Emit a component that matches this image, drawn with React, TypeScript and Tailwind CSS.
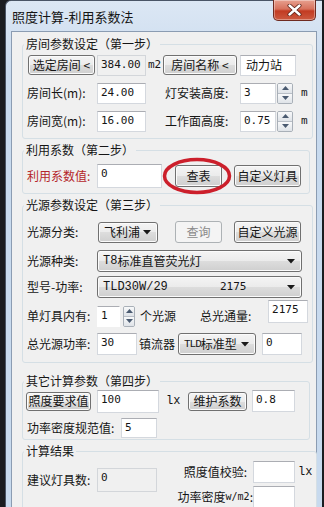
import React from "react";

type P = { className?: string; children?: React.ReactNode };

function Btn({ className = "", children, disabled = false }: P & { disabled?: boolean }) {
  return (
    <div
      className={`flex shrink-0 items-center justify-center whitespace-nowrap rounded-[3px] border ${
        disabled
          ? "border-[#adb2b5] bg-[#f4f4f4] text-[#8a8a8a]"
          : "border-[#707070] bg-[linear-gradient(#f4f4f4_0%,#ebebeb_50%,#dddddd_50%,#cfcfcf_100%)] shadow-[inset_0_0_0_1px_#fbfbfb]"
      } ${className}`}
    >
      {children}
    </div>
  );
}

function Field({ className = "", children, disabled = false }: P & { disabled?: boolean }) {
  return (
    <div
      className={`flex shrink-0 items-start whitespace-nowrap pl-[3px] pt-[1px] border ${
        disabled ? "bg-[#f0f0f0] border-[#d3d6da]" : "bg-white border-[#d4d8de] border-t-[#abadb3]"
      } ${className}`}
    >
      {children}
    </div>
  );
}

function Combo({ className = "", children }: P) {
  return (
    <div
      className={`flex shrink-0 items-center rounded-[3px] border border-[#707070] bg-[linear-gradient(#f4f4f4_0%,#ebebeb_50%,#dddddd_50%,#cfcfcf_100%)] shadow-[inset_0_0_0_1px_#fbfbfb] pl-[5px] pr-[6px] ${className}`}
    >
      <div className="flex min-w-0 flex-1 items-center whitespace-nowrap">{children}</div>
      <svg className="shrink-0" width="8" height="5" viewBox="0 0 8 5">
        <path d="M0 0H8L4 4.5Z" fill="#1a1a1a" />
      </svg>
    </div>
  );
}

function Spin({ className = "" }: P) {
  return (
    <div className={`flex shrink-0 flex-col overflow-hidden rounded-[2px] border border-[#a9b0b8] ${className}`}>
      <div className="flex flex-1 items-center justify-center border-b border-[#b8bec6] bg-linear-to-b from-[#f8f9fa] to-[#dfe3e8]">
        <svg width="7" height="4" viewBox="0 0 7 4">
          <path d="M0 4H7L3.5 0Z" fill="#4a5a70" />
        </svg>
      </div>
      <div className="flex flex-1 items-center justify-center bg-linear-to-b from-[#f8f9fa] to-[#dfe3e8]">
        <svg width="7" height="4" viewBox="0 0 7 4">
          <path d="M0 0H7L3.5 4Z" fill="#4a5a70" />
        </svg>
      </div>
    </div>
  );
}

function Group({ title, className = "", children }: P & { title: string }) {
  return (
    <fieldset className={`w-[288px] rounded-[3px] border border-[#d5dfe5] px-[4px] ${className}`}>
      <legend className="-ml-[3px] px-[2px] leading-[16px]">{title}</legend>
      {children}
    </fieldset>
  );
}

const mono = "font-['DejaVu_Sans_Mono',monospace] text-[11px]";
const serifMono = "font-['Liberation_Mono',monospace] text-[12px]";

export default function App() {
  return (
    <div className="flex h-[507px] w-[324px] overflow-hidden whitespace-nowrap bg-[#1a1c20] font-['Noto_Sans_CJK_SC','Noto_Sans',sans-serif] text-[12px] leading-[16px] text-[#151515]">
      <div className="ml-[5px] flex h-full w-[317px] shrink-0 flex-col rounded-tl-[6px] border-l border-t border-[#4a5566] bg-linear-to-b from-[#dce7f4] from-0% to-[#c8daee] to-15%">
        {/* title bar */}
        <div className="relative flex h-[30px] shrink-0 items-center pl-[6px] text-[13px]">
          <span className="mt-[1px]">照度计算-利用系数法</span>
          <div className="absolute right-[6px] top-[-1px] flex h-[21px] w-[43px] items-center justify-center rounded-b-[5px] border border-t-0 border-[#6e2a20] bg-[linear-gradient(#e7a08f_0%,#d7715c_45%,#c23b22_55%,#cc5a40_100%)] shadow-[inset_0_0_0_1px_rgba(255,255,255,0.35)]">
            <svg width="15" height="12" viewBox="0 0 15 12">
              <path d="M2.5 1.5L12.5 10.5M12.5 1.5L2.5 10.5" stroke="#5a1f15" strokeWidth="4" strokeLinecap="round" />
              <path d="M2.5 1.5L12.5 10.5M12.5 1.5L2.5 10.5" stroke="#ffffff" strokeWidth="2.4" strokeLinecap="round" />
            </svg>
          </div>
        </div>

        {/* client */}
        <div className="mx-[5px] flex flex-1 flex-col border border-[#8b9cb2] bg-[#f0f0f0] pl-[10px] pt-[4px]">
          {/* Group 1 */}
          <Group title="房间参数设定（第一步）" className="pb-[5px]">
            <div className="mt-[1px] flex h-[24px] items-center">
              <Btn className="ml-[1px] h-[20px] w-[67px]">选定房间 &lt;</Btn>
              <Field disabled className="ml-[2px] h-[21px] w-[49px]">
                <span className={mono}>384.00</span>
              </Field>
              <span className={`w-[17px] shrink-0 text-center ${mono}`}>m2</span>
              <Btn className="h-[20px] w-[74px]">房间名称 &lt;</Btn>
              <Field className="ml-[3px] h-[21px] w-[56px]">
                <span className="pl-[2px]">动力站</span>
              </Field>
            </div>
            <div className="mt-[4px] flex h-[24px] items-center">
              <span className="w-[70px] shrink-0">房间长(m):</span>
              <Field className="h-[21px] w-[49px]">
                <span className={mono}>24.00</span>
              </Field>
              <span className="ml-[19px] w-[75px] shrink-0">灯安装高度:</span>
              <Field className="h-[21px] w-[36px]">
                <span className={mono}>3</span>
              </Field>
              <Spin className="ml-[1px] h-[21px] w-[16px]" />
              <span className={`ml-[8px] ${mono}`}>m</span>
            </div>
            <div className="mt-[4px] flex h-[24px] items-center">
              <span className="w-[70px] shrink-0">房间宽(m):</span>
              <Field className="h-[21px] w-[49px]">
                <span className={mono}>16.00</span>
              </Field>
              <span className="ml-[19px] w-[75px] shrink-0">工作面高度:</span>
              <Field className="h-[21px] w-[36px]">
                <span className={mono}>0.75</span>
              </Field>
              <Spin className="ml-[1px] h-[21px] w-[16px]" />
              <span className={`ml-[8px] ${mono}`}>m</span>
            </div>
          </Group>

          {/* Group 2 */}
          <Group title="利用系数（第二步）" className="mt-[3px] pb-[2px]">
            <div className="mt-[3px] flex h-[30px] items-center">
              <span className="w-[70px] shrink-0 text-[#b5262b]">利用系数值:</span>
              <Field className="h-[24px] w-[65px]">
                <span className={mono}>0</span>
              </Field>
              <div className="relative ml-[13px] shrink-0">
                <Btn className="h-[22px] w-[47px]">查表</Btn>
                <svg
                  className="pointer-events-none absolute left-[-13px] top-[-8px]"
                  width="70"
                  height="38"
                  viewBox="0 0 70 38"
                >
                  <ellipse cx="35" cy="19" rx="32.5" ry="16.5" fill="none" stroke="#cc1f2b" strokeWidth="3.5" />
                </svg>
              </div>
              <Btn className="ml-[12px] h-[22px] w-[67px]">自定义灯具</Btn>
            </div>
          </Group>

          {/* Group 3 */}
          <Group title="光源参数设定（第三步）" className="mt-[3px] pb-[6px]">
            <div className="mt-[7px] flex h-[24px] items-center">
              <span className="w-[70px] shrink-0">光源分类:</span>
              <Combo className="ml-[1px] h-[21px] w-[60px] pl-[4px]">飞利浦</Combo>
              <Btn disabled className="ml-[17px] h-[22px] w-[47px]">
                查询
              </Btn>
              <Btn className="ml-[12px] h-[22px] w-[67px]">自定义光源</Btn>
            </div>
            <div className="mt-[5px] flex h-[24px] items-center">
              <span className="w-[70px] shrink-0">光源种类:</span>
              <Combo className="h-[22px] w-[205px]">
                <span className={serifMono}>T8</span>标准直管荧光灯
              </Combo>
            </div>
            <div className="mt-[2px] flex h-[24px] items-center">
              <span className="w-[70px] shrink-0">型号-功率:</span>
              <Combo className="h-[22px] w-[205px]">
                <span className={`w-[117px] shrink-0 ${serifMono}`}>TLD30W/29</span>
                <span className={mono}>2175</span>
              </Combo>
            </div>
            <div className="mt-[5px] flex h-[24px] items-center">
              <span className="w-[70px] shrink-0">单灯具内有:</span>
              <Field className="h-[21px] w-[23px] border-white">
                <span className={mono}>1</span>
              </Field>
              <Spin className="ml-[3px] h-[21px] w-[12px]" />
              <span className="ml-[5px] shrink-0">个光源</span>
              <span className="ml-[24px] w-[68px] shrink-0">总光通量:</span>
              <Field className="mb-[10px] h-[23px] w-[40px]">
                <span className={mono}>2175</span>
              </Field>
            </div>
            <div className="mt-[4px] flex h-[24px] items-center">
              <span className="w-[70px] shrink-0">总光源功率:</span>
              <Field className="h-[22px] w-[40px]">
                <span className={mono}>30</span>
              </Field>
              <span className="ml-[2px] shrink-0">镇流器</span>
              <Combo className="ml-[3px] h-[22px] w-[78px] pl-[2px]">
                <span className="font-['Liberation_Mono',monospace] text-[11px] tracking-[-1px]">TLD</span>标准型
              </Combo>
              <Field className="ml-[6px] h-[22px] w-[40px]">
                <span className={mono}>0</span>
              </Field>
            </div>
          </Group>

          {/* Group 4 */}
          <Group title="其它计算参数（第四步）" className="mt-[10px] pb-[1px]">
            <div className="flex h-[24px] items-center">
              <Btn className="-ml-[1px] h-[19px] w-[65px]">照度要求值</Btn>
              <Field className="ml-[6px] h-[23px] w-[62px]">
                <span className={mono}>100</span>
              </Field>
              <span className={`ml-[7px] w-[22px] shrink-0 ${serifMono}`}>lx</span>
              <Btn className="h-[19px] w-[59px]">维护系数</Btn>
              <Field className="ml-[5px] h-[22px] w-[43px]">
                <span className={mono}>0.8</span>
              </Field>
            </div>
            <div className="mt-[5px] flex h-[20px] items-center">
              <span className="w-[94px] shrink-0">功率密度规范值:</span>
              <Field className="h-[20px] w-[36px]">
                <span className={mono}>5</span>
              </Field>
            </div>
          </Group>

          {/* Group 5 */}
          <Group title="计算结果" className="mt-[3px] pb-[4px]">
            <div className="flex items-start">
              <div className="mt-[9px] flex h-[24px] shrink-0 items-center">
                <span className="w-[70px] shrink-0">建议灯具数:</span>
                <Field disabled className="h-[24px] w-[60px]">
                  <span className={mono}>0</span>
                </Field>
              </div>
              <div className="ml-[19px] flex shrink-0 flex-col">
                <div className="mt-[2px] flex h-[22px] items-center">
                  <span className="flex w-[77px] shrink-0 justify-end pr-[6px]">照度值校验:</span>
                  <Field className="h-[22px] w-[42px]" />
                  <span className={`ml-[3px] ${serifMono}`}>lx</span>
                </div>
                <div className="mt-[3px] flex h-[22px] items-center">
                  <span className="flex w-[77px] shrink-0 items-center justify-end">
                    功率密度<span className="font-['DejaVu_Sans_Mono',monospace] text-[10px]">w/m2</span>:
                  </span>
                  <Field className="h-[22px] w-[42px]" />
                </div>
              </div>
            </div>
          </Group>
        </div>
      </div>
    </div>
  );
}
